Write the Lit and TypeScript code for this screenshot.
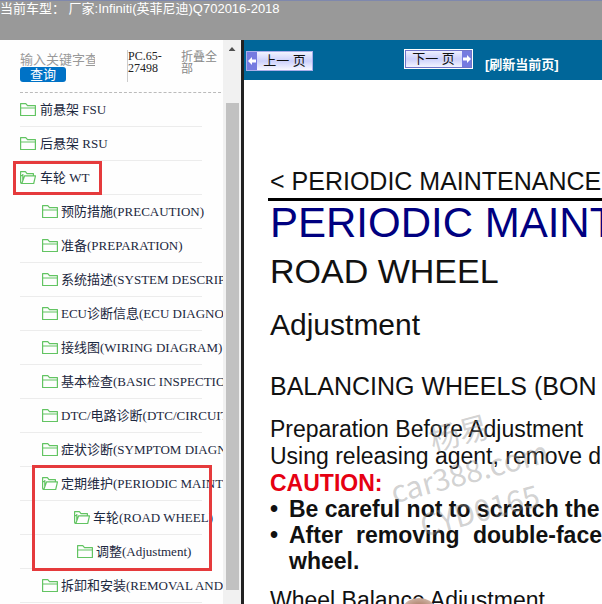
import { LitElement, html, css, svg } from "lit";
import { customElement, property } from "lit/decorators.js";

interface TreeNode {
  label: string;
  level: number;
  open?: boolean;
  marked?: boolean;
}

const nodesBefore: TreeNode[] = [
  { label: "前悬架 FSU", level: 1 },
  { label: "后悬架 RSU", level: 1 },
  { label: "车轮 WT", level: 1, open: true, marked: true },
  { label: "预防措施(PRECAUTION)", level: 2 },
  { label: "准备(PREPARATION)", level: 2 },
  { label: "系统描述(SYSTEM DESCRIP", level: 2 },
  { label: "ECU诊断信息(ECU DIAGNOS", level: 2 },
  { label: "接线图(WIRING DIAGRAM)", level: 2 },
  { label: "基本检查(BASIC INSPECTIO", level: 2 },
  { label: "DTC/电路诊断(DTC/CIRCUIT", level: 2 },
  { label: "症状诊断(SYMPTOM DIAGN", level: 2 },
];

const nodesMarked: TreeNode[] = [
  { label: "定期维护(PERIODIC MAINTE", level: 2, open: true },
  { label: "车轮(ROAD WHEEL)", level: 3, open: true },
  { label: "调整(Adjustment)", level: 4 },
];

const nodesAfter: TreeNode[] = [
  { label: "拆卸和安装(REMOVAL AND", level: 2 },
];

const closedFolder = svg`<path d="M.6 13.5V1.6h5.200l1.700 2h7.900v9.900z M.6 6h14.800"/>`;
const openFolder = svg`<path d="M1.800 13.500Q.6 13.500.6 12V1.600h4.800l1.600 2h6.400v2.200 M1.800 13.500L4.600 5.800h10.900l-1.800 7.700z M.8 6l2.600-1.600M2.800 10.500V4"/>`;

@customElement("tree-row")
class TreeRow extends LitElement {
  @property({ attribute: false }) node!: TreeNode;

  static styles = css`
    :host { display: block; position: relative; }
    .row {
      display: flex;
      align-items: center;
      gap: 4px;
      height: 33px;
      margin-right: 21px;
      border-bottom: 1px solid #ececec;
      white-space: nowrap;
      color: #1c2840;
      text-decoration: none;
      font: 13px/20px "Liberation Serif", "Noto Sans CJK SC", serif;
    }
    .level2 { padding-left: 22px; }
    .level3 { padding-left: 54px; }
    .level4 { padding-left: 57px; }
    .level2, .level3, .level4 { gap: 3px; }
    .icon {
      flex: none;
      width: 16px;
      height: 16px;
      fill: none;
      stroke: #62c462;
      stroke-width: 1.2;
      stroke-linejoin: round;
    }
    .mark {
      position: absolute;
      inset: 0 auto 0 -7px;
      width: 83px;
      border: 3px solid #e53a3c;
      pointer-events: none;
    }
  `;

  render() {
    const n = this.node;
    return html`
      <a class="row level${n.level}" href="#">
        <svg class="icon" viewBox="0 0 16 16" aria-hidden="true">${n.open ? openFolder : closedFolder}</svg>
        <span>${n.label}</span>
      </a>
      ${n.marked ? html`<div class="mark"></div>` : ""}
    `;
  }
}

@customElement("side-panel")
class SidePanel extends LitElement {
  static styles = css`
    :host {
      display: flex;
      min-width: 0;
      overflow: hidden;
      border-right: 3px solid #222;
      background: #fefefe;
    }
    .content { flex: 1; min-width: 0; overflow: hidden; padding-left: 20px; }
    .tools {
      display: grid;
      grid-template-columns: 75px 36px 36px;
      column-gap: 32px;
      align-items: start;
      height: 42px;
      padding-top: 10px;
      margin-right: 2px;
      border-bottom: 1px dashed #bbb;
    }
    .search { display: flex; flex-direction: column; align-items: flex-start; padding-top: 2px; }
    .query {
      width: 100%;
      height: 15px;
      padding: 0;
      border: 0;
      background: none;
      font: 13px/15px "Liberation Sans", "Noto Sans CJK SC", sans-serif;
    }
    .query::placeholder { color: #999; opacity: 1; }
    .go {
      width: 46px;
      height: 15px;
      padding: 0;
      border: 0;
      border-radius: 3px;
      background: #0072c6;
      color: #fff;
      font: 13px/14px "Liberation Sans", "Noto Sans CJK SC", sans-serif;
    }
    .code {
      width: 36px;
      height: 32px;
      border-left: 1px solid #ccc;
      color: #222;
      font: 12px/12px "Liberation Serif", serif;
    }
    .fold {
      width: 36px;
      margin-left: -14px;
      color: #888;
      text-decoration: none;
      font: 12px/12px "Noto Sans CJK SC", sans-serif;
    }
    .group { position: relative; }
    .mark {
      position: absolute;
      inset: -2px auto -2px 12px;
      width: 174px;
      border: 3px solid #e53a3c;
      pointer-events: none;
    }
    .scroll {
      display: flex;
      flex-direction: column;
      align-items: center;
      width: 18px;
      height: 100%;
      background: #f1f1f1;
    }
    .up {
      width: 7px;
      height: 4px;
      margin: 7px 0 52px;
      background: #505050;
      clip-path: polygon(50% 0, 100% 100%, 0 100%);
    }
    .thumb { flex: 1; width: 13px; margin-bottom: 14px; background: #c1c1c1; }
  `;

  private rows(nodes: TreeNode[]) {
    return nodes.map((n) => html`<tree-row .node=${n}></tree-row>`);
  }

  render() {
    return html`
      <div class="content">
        <div class="tools">
          <div class="search">
            <input class="query" type="text" aria-label="输入关键字查询" placeholder="输入关键字查询" />
            <button class="go" type="button">查询</button>
          </div>
          <div class="code">PC.65-27498</div>
          <a class="fold" href="#">折叠全部</a>
        </div>
        <nav>
          ${this.rows(nodesBefore)}
          <div class="group">
            ${this.rows(nodesMarked)}
            <div class="mark"></div>
          </div>
          ${this.rows(nodesAfter)}
        </nav>
      </div>
      <div class="scroll" aria-hidden="true">
        <div class="up"></div>
        <div class="thumb"></div>
      </div>
    `;
  }
}

@customElement("manual-page")
class ManualPage extends LitElement {
  static styles = css`
    :host {
      display: flex;
      flex-direction: column;
      min-width: 0;
      overflow: hidden;
      background: #fff;
    }
    .bar {
      display: flex;
      align-items: flex-start;
      height: 31px;
      padding: 9px 2px 0;
      background: #006699;
    }
    .pager {
      display: flex;
      align-items: center;
      height: 20px;
      padding: 0;
      border: 1px solid #a9aeea;
      background: linear-gradient(#f2f3ff, #ccd0fb 50%, #f8f8ff);
      color: #111;
      font: 13px/16px "Liberation Sans", "Noto Sans CJK SC", sans-serif;
    }
    .prev { width: 67px; margin-top: 2px; }
    .next {
      width: 69px;
      margin-left: 91px;
      border-color: #fff;
      outline: 1px solid #7075c8;
      outline-offset: -2px;
    }
    .pager span { flex: 1; white-space: pre; text-align: center; }
    .arrow { flex: none; width: 10px; height: 18px; background: #757be0; fill: #fff; }
    .refresh {
      margin: 7px 0 0 12px;
      color: #fff;
      text-decoration: none;
      white-space: nowrap;
      font: bold 13px/18px "Liberation Sans", "Noto Sans CJK SC", sans-serif;
    }
    .doc {
      position: relative;
      flex: 1;
      min-height: 0;
      overflow: hidden;
      padding: 86px 0 0 26px;
      color: #111;
      white-space: nowrap;
      font: 23px/27px "Liberation Sans", sans-serif;
    }
    .doc > * { margin: 0; font-weight: normal; }
    .doc .crumb {
      margin-left: -2px;
      padding: 0 0 2px 2px;
      border-bottom: 3px solid #000;
      font-size: 25px;
      line-height: 30px;
    }
    .doc .title { color: #000080; font-size: 42px; line-height: 44px; }
    .doc .subject { margin-top: 6px; font-size: 34px; line-height: 40px; }
    .doc .task { margin-top: 16px; font-size: 30px; line-height: 36px; }
    .doc .section { margin: 28px 0 15px; font-size: 25px; line-height: 30px; }
    .doc .caution { color: #e60012; font-weight: bold; line-height: 26px; }
    .doc .notes {
      padding: 0;
      margin-bottom: 13px;
      list-style: none;
      font-weight: bold;
      line-height: 26px;
    }
    .notes li { display: flex; }
    .notes li::before { content: "•"; flex: none; width: 19px; }
    .notes p { flex: 1; margin: 0; }
    .notes .wrap { white-space: normal; text-align: justify; }
    .doc .watermark {
      position: absolute;
      left: 135px;
      top: 330px;
      width: 180px;
      transform: rotate(-15deg);
      color: rgba(140, 140, 140, 0.4);
      text-align: center;
      font: 30px/40px "Noto Sans CJK SC", sans-serif;
      pointer-events: none;
    }
    .doc .photo {
      position: absolute;
      left: 160px;
      bottom: -12px;
      width: 30px;
      height: 18px;
      border-radius: 50%;
      background: radial-gradient(#a87860, #c8a898 60%, #e8ddd8);
    }
  `;

  render() {
    return html`
      <div class="bar">
        <button class="pager prev" type="button">
          <svg class="arrow" viewBox="0 0 10 18" aria-hidden="true"><path d="M1 9l4-4v2.500h4v3h-4V13z" /></svg>
          <span>上一 页</span>
        </button>
        <button class="pager next" type="button">
          <span>下一 页</span>
          <svg class="arrow" viewBox="0 0 10 18" aria-hidden="true"><path d="M9 9L5 5v2.500H1v3h4V13z" /></svg>
        </button>
        <a class="refresh" href="#">[刷新当前页]</a>
      </div>
      <article class="doc">
        <p class="crumb">&lt; PERIODIC MAINTENANCE</p>
        <h1 class="title">PERIODIC MAINT</h1>
        <h2 class="subject">ROAD WHEEL</h2>
        <h3 class="task">Adjustment</h3>
        <h4 class="section">BALANCING WHEELS (BON</h4>
        <p>Preparation Before Adjustment</p>
        <p>Using releasing agent, remove d</p>
        <p class="caution">CAUTION:</p>
        <ul class="notes">
          <li><p>Be careful not to scratch the</p></li>
          <li><p class="wrap">After removing double-face wheel.</p></li>
        </ul>
        <div class="photo"></div>
        <p>Wheel Balance Adjustment</p>
        <div class="watermark">杨易<br />car388.com<br />CYD0165</div>
      </article>
    `;
  }
}

@customElement("app-root")
class AppRoot extends LitElement {
  static styles = css`
    :host { display: flex; flex-direction: column; height: 100vh; background: #fff; }
    .top {
      flex: none;
      height: 39px;
      border-top: 1px solid #7f88ad;
      background: #999;
      color: #fff;
      white-space: nowrap;
      font: 13px/15px "Liberation Sans", "Noto Sans CJK SC", sans-serif;
    }
    .frames {
      flex: 1;
      min-height: 0;
      display: grid;
      grid-template: minmax(0, 1fr) / 244px minmax(0, 1fr);
    }
  `;

  render() {
    return html`
      <header class="top">当前车型： 厂家:Infiniti(英菲尼迪)Q702016-2018</header>
      <main class="frames">
        <side-panel></side-panel>
        <manual-page></manual-page>
      </main>
    `;
  }
}
